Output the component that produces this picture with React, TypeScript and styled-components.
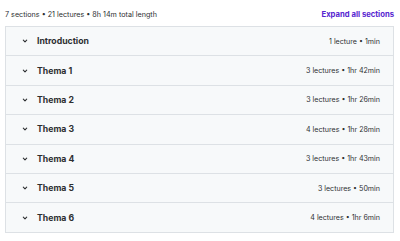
import React from "react";
import styled, { createGlobalStyle } from "styled-components";

const Global = createGlobalStyle`
  html, body { margin: 0; padding: 0; background: #ffffff; }
  body { font-family: "Inter", "Roboto", sans-serif; color: #2d2f31; }
`;

const Page = styled.div`
  width: 400px;
  padding: 5px 6px 0 5px;
  box-sizing: border-box;
`;

const Header = styled.div`
  display: flex;
  align-items: center;
  justify-content: space-between;
  height: 18px;
  margin-bottom: 3px;
`;

const Summary = styled.span`
  font-size: 7.2px;
  color: #2d2f31;
`;

const ExpandLink = styled.button`
  border: 0;
  background: none;
  padding: 0;
  font-family: inherit;
  font-size: 7.7px;
  font-weight: 700;
  color: #5624d0;
  cursor: pointer;
`;

const Sections = styled.div`
  border: 1px solid #dde1e5;
  display: flex;
  flex-direction: column;
`;

const Row = styled.div<{ $first?: boolean }>`
  display: flex;
  align-items: center;
  height: 28.4px;
  padding: 0 13px 0 15px;
  background: #f7f9fa;
  border-top: ${(p) => (p.$first ? "0" : "1px solid #dde1e5")};
`;

const Chevron = styled.span`
  display: flex;
  width: 8px;
  margin-right: 8px;
  color: #2d2f31;
`;

const Title = styled.span`
  flex: 1;
  font-size: 8.7px;
  font-weight: 700;
  color: #2d2f31;
`;

const Meta = styled.span`
  font-size: 7.1px;
  color: #2d2f31;
`;

const sections = [
  { title: "Introduction", meta: "1 lecture • 1min" },
  { title: "Thema 1", meta: "3 lectures • 1hr 42min" },
  { title: "Thema 2", meta: "3 lectures • 1hr 26min" },
  { title: "Thema 3", meta: "4 lectures • 1hr 28min" },
  { title: "Thema 4", meta: "3 lectures • 1hr 43min" },
  { title: "Thema 5", meta: "3 lectures • 50min" },
  { title: "Thema 6", meta: "4 lectures • 1hr 6min" },
];

const ChevronIcon = () => (
  <svg width="8" height="8" viewBox="0 0 8 8" fill="none">
    <path d="M2.3 3.2 L4 4.9 L5.7 3.2" stroke="currentColor" strokeWidth="1.1" strokeLinecap="round" strokeLinejoin="round" />
  </svg>
);

export default function App() {
  return (
    <Page>
      <Global />
      <Header>
        <Summary>7 sections • 21 lectures • 8h 14m total length</Summary>
        <ExpandLink>Expand all sections</ExpandLink>
      </Header>
      <Sections>
        {sections.map((s, i) => (
          <Row key={s.title} $first={i === 0}>
            <Chevron>
              <ChevronIcon />
            </Chevron>
            <Title>{s.title}</Title>
            <Meta>{s.meta}</Meta>
          </Row>
        ))}
      </Sections>
    </Page>
  );
}
